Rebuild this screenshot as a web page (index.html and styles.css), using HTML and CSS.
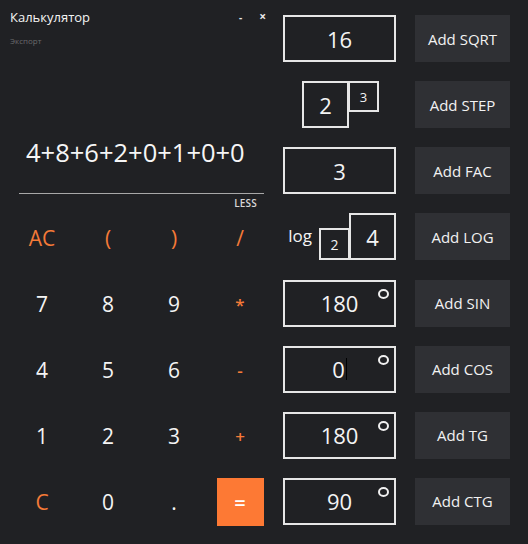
FILE: index.html
```html
<!DOCTYPE html>
<html lang="ru">
<head>
<meta charset="utf-8">
<title>Калькулятор</title>
<link rel="stylesheet" href="styles.css">
</head>
<body>
<div class="app">
  <section class="calc">
    <header class="titlebar">
      <span class="title">Калькулятор</span>
      <span class="winbtns"><span class="wb-min">-</span><span class="wb-close">×</span></span>
    </header>
    <div class="export">Экспорт</div>
    <div class="display"><span class="expr">4+8+6+2+0+1+0+0</span></div>
    <div class="less">LESS</div>
    <div class="keys">
      <div class="key op">AC</div>
      <div class="key op">(</div>
      <div class="key op">)</div>
      <div class="key op">/</div>
      <div class="key">7</div>
      <div class="key">8</div>
      <div class="key">9</div>
      <div class="key op small">*</div>
      <div class="key">4</div>
      <div class="key">5</div>
      <div class="key">6</div>
      <div class="key op small">-</div>
      <div class="key">1</div>
      <div class="key">2</div>
      <div class="key">3</div>
      <div class="key op small">+</div>
      <div class="key op">C</div>
      <div class="key">0</div>
      <div class="key">.</div>
      <div class="key"><span class="eq">=</span></div>
    </div>
  </section>
  <section class="funcs">
    <div class="cell"><div class="box wide">16</div></div>
    <div class="btn">Add SQRT</div>

    <div class="cell center">
      <div class="pow">
        <div class="box sq">2</div>
        <div class="box exp">3</div>
      </div>
    </div>
    <div class="btn">Add STEP</div>

    <div class="cell"><div class="box wide">3</div></div>
    <div class="btn">Add FAC</div>

    <div class="cell logcell">
      <span class="logtxt">log</span>
      <div class="box base">2</div>
      <div class="box sq">4</div>
    </div>
    <div class="btn">Add LOG</div>

    <div class="cell"><div class="box wide deg">180<i class="degree"></i></div></div>
    <div class="btn">Add SIN</div>

    <div class="cell"><div class="box wide deg">0<span class="caret"></span><i class="degree"></i></div></div>
    <div class="btn">Add COS</div>

    <div class="cell"><div class="box wide deg">180<i class="degree"></i></div></div>
    <div class="btn">Add TG</div>

    <div class="cell"><div class="box wide deg">90<i class="degree"></i></div></div>
    <div class="btn">Add CTG</div>
  </section>
</div>
</body>
</html>
```

FILE: styles.css
```css
html, body {
  margin: 0;
  padding: 0;
  background: #202124;
}
body {
  width: 528px;
  height: 544px;
  overflow: hidden;
  font-family: "Open Sans", "Noto Sans", sans-serif;
  color: #f2f2f2;
}
.app {
  display: flex;
  height: 544px;
}
.calc {
  width: 275px;
  display: flex;
  flex-direction: column;
}
.titlebar {
  display: flex;
  justify-content: space-between;
  align-items: center;
  padding: 8px 9px 0 10px;
  height: 18px;
}
.title {
  font-size: 13px;
  color: #f4f4f4;
  line-height: 18px;
}
.winbtns {
  display: flex;
  gap: 17px;
  font-size: 10px;
  font-weight: bold;
  color: #e8e8e8;
  line-height: 18px;
}
.wb-close {
  font-size: 12px;
}
.export {
  font-size: 8px;
  color: #6a6a6c;
  padding-left: 10px;
  margin-top: 9px;
  line-height: 11px;
}
.display {
  margin: 0 11px 0 19px;
  padding: 88px 0 23px 7px;
  border-bottom: 1.5px solid #a8a8a8;
}
.expr {
  font-size: 25.5px;
  line-height: 36px;
  color: #f6f6f6;
  display: block;
}
.less {
  align-self: flex-end;
  margin-right: 18px;
  font-size: 10px;
  font-weight: 600;
  line-height: 10px;
  color: #d8d8d8;
  letter-spacing: 0.2px;
  margin-top: 4px;
}
.keys {
  display: grid;
  grid-template-columns: repeat(4, 66px);
  grid-auto-rows: 66px;
  margin-left: 9px;
  margin-top: -3px;
}
.key {
  display: flex;
  align-items: center;
  justify-content: center;
  font-size: 21px;
  color: #f4f4f4;
}
.key.op {
  color: #f47a38;
}
.key.small {
  font-size: 17px;
  font-weight: 600;
}
.eq {
  width: 47px;
  height: 48px;
  background: #fd7934;
  color: #fff;
  display: flex;
  align-items: center;
  justify-content: center;
  font-size: 20px;
  font-weight: 600;
}
.funcs {
  display: grid;
  grid-template-columns: 113px 95px;
  grid-auto-rows: 47px;
  column-gap: 19px;
  row-gap: 19.15px;
  margin-left: 8px;
  padding-top: 15px;
}
.cell {
  display: flex;
  align-items: stretch;
}
.cell.center {
  justify-content: center;
  padding-left: 2px;
}
.box {
  border: 2px solid #e6e6e6;
  box-sizing: border-box;
  display: flex;
  align-items: center;
  justify-content: center;
  font-size: 22px;
  color: #f4f4f4;
  background: #202124;
}
.box.wide {
  width: 113px;
  height: 47px;
  position: relative;
}
.pow {
  display: flex;
  align-items: flex-start;
}
.box.sq {
  width: 47px;
  height: 47px;
}
.box.exp {
  width: 31px;
  height: 31px;
  font-size: 13px;
  margin-left: -1px;
}
.logcell {
  justify-content: flex-end;
  align-items: flex-end;
}
.logtxt {
  align-self: center;
  font-size: 17px;
  margin-right: 7px;
  margin-top: -2px;
  color: #f4f4f4;
}
.box.base {
  width: 31px;
  height: 32px;
  font-size: 14px;
  margin-right: -1px;
}
.degree {
  position: absolute;
  right: 5px;
  top: 7px;
  width: 7px;
  height: 6px;
  border: 2px solid #f0f0f0;
  border-radius: 50%;
}
.caret {
  display: inline-block;
  width: 1px;
  height: 22px;
  background: #000;
  margin-left: 1px;
}
.btn {
  background: #2f3034;
  display: flex;
  align-items: center;
  justify-content: center;
  font-size: 15px;
  color: #f2f2f2;
}
```
